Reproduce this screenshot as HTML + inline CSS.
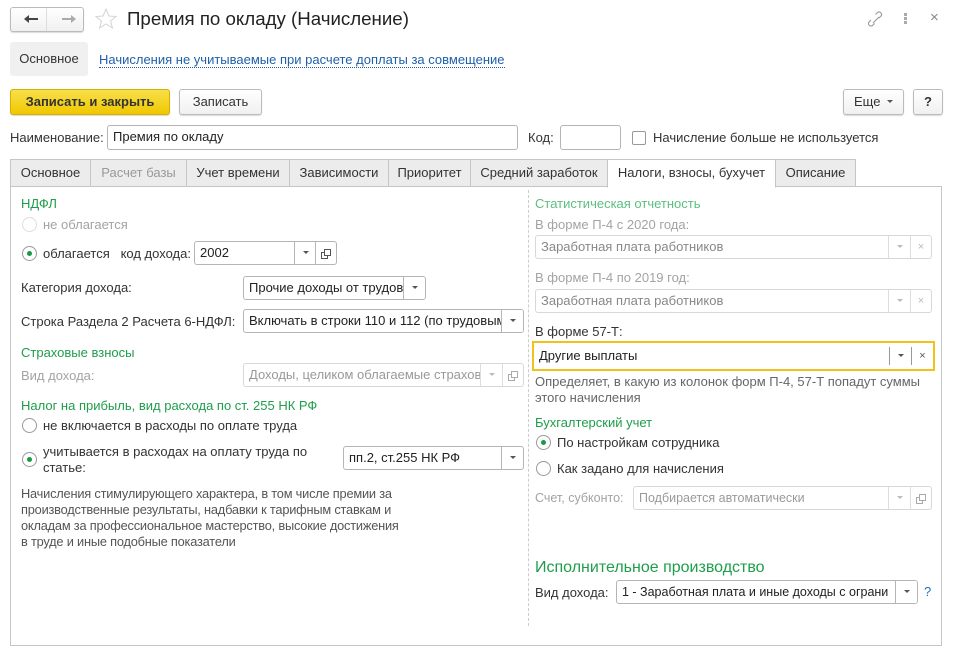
<!DOCTYPE html>
<html><head><meta charset="utf-8"><style>
*{box-sizing:border-box}
body{margin:0;width:953px;height:626px;background:#fff;font-family:"Liberation Sans",Arial,sans-serif;font-size:13px;color:#333;position:relative;overflow:hidden}
.a{position:absolute;white-space:nowrap}
.btn{position:absolute;border:1px solid #bbb;border-radius:3px;background:linear-gradient(#fff,#f0f0f0);box-shadow:0 1px 1px rgba(0,0,0,.15);text-align:center;color:#333}
.inp{position:absolute;border:1px solid #b5b5b5;border-radius:3px;background:#fff;height:24px;padding:0 5px;line-height:22px;overflow:hidden;white-space:nowrap;color:#222}
.dis{border-color:#d8d8d8;color:#999}
.dd{position:absolute;top:0;bottom:0;border-left:1px solid #b5b5b5;width:22px;text-align:center}
.dis .dd{border-left-color:#ddd}
.tri{display:inline-block;width:0;height:0;border-left:3px solid transparent;border-right:3px solid transparent;border-top:3px solid #555;vertical-align:middle;margin-top:-2px}
.dis .tri{border-top-color:#bbb}
.g{color:#1e9e4a}
.gl{color:#5cbf80}
.gr{color:#a3a3a3}
.rad{position:absolute;width:15px;height:15px;border:1px solid #999;border-radius:50%;background:#fff}
.rad.on:after{content:"";position:absolute;left:4px;top:4px;width:5px;height:5px;border-radius:50%;background:#1a9a45}
.tab{position:absolute;top:159px;height:28px;border:1px solid #c5c5c5;background:#ececec;line-height:26px;text-align:center;color:#333}
.x{color:#888;font-size:11px}
</style></head><body>
<div class="btn" style="left:10px;top:7px;width:74px;height:25px"></div>
<div class="a" style="left:46px;top:8px;width:1px;height:23px;background:#ddd"></div>
<svg class="a" style="left:22px;top:13px" width="56" height="12"><path d="M6 6h10" stroke="#444" stroke-width="2"/><path d="M2 6l5-4v8z" fill="#444"/><path d="M40 6h10" stroke="#aaa" stroke-width="2"/><path d="M54 6l-5-4v8z" fill="#aaa"/></svg>
<svg class="a" style="left:94px;top:8px" width="24" height="22"><path d="M12 1l3 7 7 .5-5.5 4.5 2 7L12 16l-6.5 4 2-7L2 8.5 9 8z" fill="none" stroke="#d4d4d4"/></svg>
<div class="a" style="left:127px;top:8px;font-size:18.7px;color:#222">Премия по окладу (Начисление)</div>
<svg class="a" style="left:866px;top:10px" width="20" height="18"><path d="M7 13l6-6M5 10l-2 2a2.5 2.5 0 0 0 3.5 3.5l2-2M13 8l2-2a2.5 2.5 0 0 0-3.5-3.5l-2 2" fill="none" stroke="#999" stroke-width="1.1"/></svg>
<div class="a" style="left:904px;top:13px;width:3px;line-height:4px;font-size:0"><span style="display:block;width:3px;height:3px;background:#aaa;margin-bottom:1px"></span><span style="display:block;width:3px;height:3px;background:#aaa;margin-bottom:1px"></span><span style="display:block;width:3px;height:3px;background:#aaa"></span></div>
<div class="a" style="left:930px;top:9px;font-size:15px;color:#888">×</div>

<div class="a" style="left:10px;top:42px;width:78px;height:34px;background:#f0f0f0;border-radius:3px;line-height:34px;text-align:center;color:#333">Основное</div>
<div class="a" style="left:99px;top:52px;color:#1f5fa8;border-bottom:1px dotted #1f5fa8;line-height:15px">Начисления не учитываемые при расчете доплаты за совмещение</div>

<div class="btn" style="left:10px;top:89px;width:160px;height:26px;background:linear-gradient(#f8e04a,#f0c800);border-color:#d6b000;font-weight:bold;line-height:24px;color:#333">Записать и закрыть</div>
<div class="btn" style="left:179px;top:89px;width:83px;height:26px;line-height:24px">Записать</div>
<div class="btn" style="left:843px;top:89px;width:61px;height:26px;line-height:24px">Еще <span class="tri" style="margin-left:3px"></span></div>
<div class="btn" style="left:913px;top:89px;width:30px;height:26px;line-height:24px;font-weight:bold">?</div>

<div class="a" style="left:10px;top:130px">Наименование:</div>
<div class="inp" style="left:107px;top:125px;width:411px;height:25px">Премия по окладу</div>
<div class="a" style="left:528px;top:130px">Код:</div>
<div class="inp" style="left:560px;top:125px;width:61px;height:25px"></div>
<div class="a" style="left:632px;top:131px;width:14px;height:14px;border:1px solid #999;border-radius:2px"></div>
<div class="a" style="left:653px;top:130px">Начисление больше не используется</div>

<div class="a" style="left:10px;top:186px;width:932px;height:460px;border:1px solid #c5c5c5"></div>
<div class="tab" style="left:10px;width:81px">Основное</div>
<div class="tab" style="left:90px;width:97px;color:#999">Расчет базы</div>
<div class="tab" style="left:186px;width:104px">Учет времени</div>
<div class="tab" style="left:289px;width:100px">Зависимости</div>
<div class="tab" style="left:388px;width:83px">Приоритет</div>
<div class="tab" style="left:470px;width:138px">Средний заработок</div>
<div class="tab" style="left:607px;width:169px;background:#fff;border-bottom-color:#fff;height:29px">Налоги, взносы, бухучет</div>
<div class="tab" style="left:775px;width:81px">Описание</div>

<div class="a" style="left:528px;top:190px;height:436px;border-left:1px dashed #ccc"></div>

<!-- left -->
<div class="a g" style="left:21px;top:196px">НДФЛ</div>
<div class="rad" style="left:22px;top:217px;border-color:#ddd"></div>
<div class="a gr" style="left:43px;top:217px">не облагается</div>
<div class="rad on" style="left:22px;top:246px"></div>
<div class="a" style="left:43px;top:246px">облагается&nbsp;&nbsp;&nbsp;код дохода:</div>
<div class="inp" style="left:194px;top:241px;width:143px">2002<div class="dd" style="right:20px"><span class="tri"></span></div><div class="dd" style="right:0;width:21px"><svg width="10" height="10" style="vertical-align:middle"><rect x="0.5" y="3.5" width="6" height="6" fill="none" stroke="#555"/><rect x="3.5" y="0.5" width="6" height="6" fill="#fff" stroke="#555"/></svg></div></div>
<div class="a" style="left:21px;top:280px">Категория дохода:</div>
<div class="inp" style="left:243px;top:276px;width:183px">Прочие доходы от трудов<div class="dd" style="right:0;background:#fff"><span class="tri"></span></div></div>
<div class="a" style="left:21px;top:314px">Строка Раздела 2 Расчета 6-НДФЛ:</div>
<div class="inp" style="left:243px;top:309px;width:281px">Включать в строки 110 и 112 (по трудовым<div class="dd" style="right:0;background:#fff"><span class="tri"></span></div></div>
<div class="a g" style="left:21px;top:345px">Страховые взносы</div>
<div class="a gr" style="left:21px;top:368px">Вид дохода:</div>
<div class="inp dis" style="left:243px;top:363px;width:281px">Доходы, целиком облагаемые страхові<div class="dd" style="right:21px;background:#fff"><span class="tri"></span></div><div class="dd" style="right:0;width:21px"><svg width="10" height="10" style="vertical-align:middle"><rect x="0.5" y="3.5" width="6" height="6" fill="none" stroke="#aaa"/><rect x="3.5" y="0.5" width="6" height="6" fill="#fff" stroke="#aaa"/></svg></div></div>
<div class="a g" style="left:21px;top:398px">Налог на прибыль, вид расхода по ст. 255 НК РФ</div>
<div class="rad" style="left:22px;top:418px"></div>
<div class="a" style="left:43px;top:418px">не включается в расходы по оплате труда</div>
<div class="rad on" style="left:22px;top:452px"></div>
<div class="a" style="left:43px;top:444px;line-height:16px">учитывается в расходах на оплату труда по<br>статье:</div>
<div class="inp" style="left:343px;top:446px;width:181px">пп.2, ст.255 НК РФ<div class="dd" style="right:0"><span class="tri"></span></div></div>
<div class="a" style="left:21px;top:486px;line-height:16px;font-size:12.8px;color:#555;letter-spacing:-0.2px">Начисления стимулирующего характера, в том числе премии за<br>производственные результаты, надбавки к тарифным ставкам и<br>окладам за профессиональное мастерство, высокие достижения<br>в труде и иные подобные показатели</div>

<!-- right -->
<div class="a gl" style="left:535px;top:196px">Статистическая отчетность</div>
<div class="a gr" style="left:535px;top:217px">В форме П-4 с 2020 года:</div>
<div class="inp dis" style="left:535px;top:235px;width:397px;color:#888">Заработная плата работников<div class="dd" style="right:21px"><span class="tri"></span></div><div class="dd x" style="right:0;width:21px;color:#bbb">×</div></div>
<div class="a gr" style="left:535px;top:270px">В форме П-4 по 2019 год:</div>
<div class="inp dis" style="left:535px;top:289px;width:397px;color:#888">Заработная плата работников<div class="dd" style="right:21px"><span class="tri"></span></div><div class="dd x" style="right:0;width:21px;color:#bbb">×</div></div>
<div class="a" style="left:535px;top:324px">В форме 57-Т:</div>
<div class="inp" style="left:532px;top:341px;width:403px;height:30px;border:2px solid #f2c21b;border-radius:0;line-height:26px;padding-left:5px">Другие выплаты<div class="dd" style="right:22px;top:4px;bottom:4px;line-height:18px;border-left-color:#999"><span class="tri"></span></div><div class="dd x" style="right:0;width:22px;top:4px;bottom:4px;line-height:18px;border-left-color:#999;color:#555">×</div></div>
<div class="a" style="left:535px;top:374px;line-height:16px;color:#666">Определяет, в какую из колонок форм П-4, 57-Т попадут суммы<br>этого начисления</div>
<div class="a g" style="left:535px;top:415px">Бухгалтерский учет</div>
<div class="rad on" style="left:536px;top:435px"></div>
<div class="a" style="left:557px;top:435px">По настройкам сотрудника</div>
<div class="rad" style="left:536px;top:461px"></div>
<div class="a" style="left:557px;top:461px">Как задано для начисления</div>
<div class="a gr" style="left:535px;top:491px;font-size:12.5px">Счет, субконто:</div>
<div class="inp dis" style="left:633px;top:486px;width:299px;font-size:12.5px">Подбирается автоматически<div class="dd" style="right:21px"><span class="tri"></span></div><div class="dd" style="right:0;width:21px"><svg width="10" height="10" style="vertical-align:middle"><rect x="0.5" y="3.5" width="6" height="6" fill="none" stroke="#aaa"/><rect x="3.5" y="0.5" width="6" height="6" fill="#fff" stroke="#aaa"/></svg></div></div>
<div class="a g" style="left:535px;top:559px;font-size:16px">Исполнительное производство</div>
<div class="a" style="left:535px;top:585px">Вид дохода:</div>
<div class="inp" style="left:616px;top:580px;width:302px;font-size:12.5px">1 - Заработная плата и иные доходы с ограни<div class="dd" style="right:0;background:#fff"><span class="tri"></span></div></div>
<div class="a" style="left:924px;top:584px;color:#1f6fc0">?</div>
</body></html>
